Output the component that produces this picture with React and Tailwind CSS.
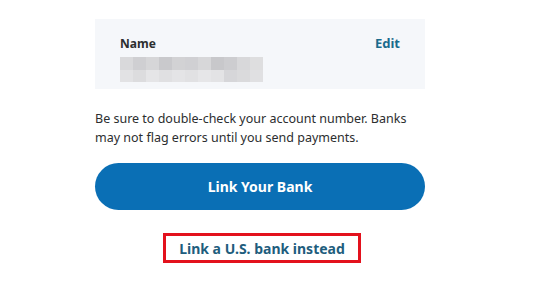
export default function App() {
  const top = ["#d9d9db", "#cfcfd2", "#d6d6d8", "#c9c9cc", "#d2d2d4", "#d0d0d3", "#d7d7d9", "#c8c8cb", "#cdcdd0", "#d8d8da", "#dededf"];
  const bottom = ["#e2e2e4", "#dcdcde", "#e5e5e7", "#e0e0e2", "#e4e4e6", "#e1e1e3", "#e6e6e8", "#e3e3e5", "#d6d6d9", "#dadadc", "#e0e0e2"];
  return (
    <div className="w-[544px] h-[303px] bg-white overflow-hidden" style={{ fontFamily: '"Noto Sans", "Open Sans", Arial, sans-serif' }}>
      <div className="ml-[95px] w-[330px] pt-[19px] flex flex-col">
        <div className="bg-[#f5f7fa] h-[70px] pl-[25px] pr-[25px] pt-[16px] flex flex-col">
          <div className="flex justify-between items-center h-[18px]">
            <span className="text-[12px] font-bold text-[#2c2e2f]">Name</span>
            <span className="text-[13px] font-bold text-[#1a6b8c]">Edit</span>
          </div>
          <div className="mt-[4px] w-[143px] flex flex-col">
            <div className="flex h-[13px]">
              {top.map((c, i) => (
                <div key={i} className="flex-1" style={{ backgroundColor: c }} />
              ))}
            </div>
            <div className="flex h-[12px]">
              {bottom.map((c, i) => (
                <div key={i} className="flex-1" style={{ backgroundColor: c }} />
              ))}
            </div>
          </div>
        </div>
        <p className="mt-[20px] text-[12.5px] leading-[19px] text-[#2c2e2f]">
          Be sure to double-check your account number. Banks may not flag errors until you send payments.
        </p>
        <button className="mt-[16px] h-[47px] w-full rounded-full bg-[#0a6fb5] text-white text-[14px] font-bold">
          Link Your Bank
        </button>
        <div className="mt-[23px] flex justify-center">
          <div className="ml-[4px] w-[198px] h-[30px] border-[3px] border-[#e3111d] flex items-center justify-center">
            <span className="text-[14px] font-bold text-[#1e5d7d]">Link a U.S. bank instead</span>
          </div>
        </div>
      </div>
    </div>
  );
}
